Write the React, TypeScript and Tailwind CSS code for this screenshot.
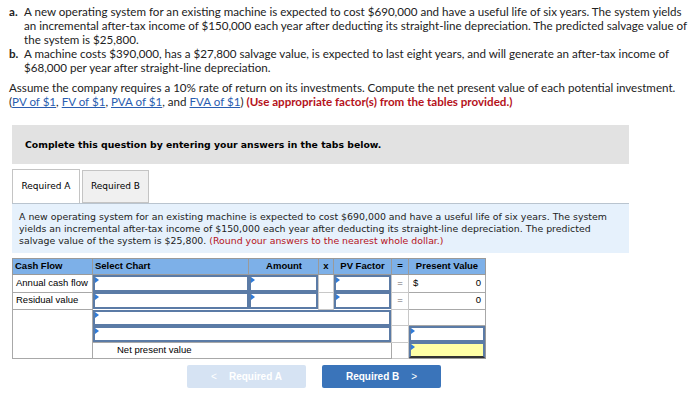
import React from "react";

const body = { fontFamily: "Lato, 'Open Sans', sans-serif" };
const verdana = { fontFamily: "'DejaVu Sans', Verdana, sans-serif" };
const arial = { fontFamily: "'Liberation Sans', Arial, sans-serif" };

function Marker() {
  return (
    <span className="absolute left-0 top-0 w-0 h-0 border-t-[3px] border-b-[3px] border-l-[4px] border-t-transparent border-b-transparent border-l-[#2f7bd8]" />
  );
}

function InputCell({ yellow = false, short = false }: { yellow?: boolean; short?: boolean }) {
  return (
    <div
      className={`relative ${short ? "h-[16px]" : "h-[17px]"} border-2 border-[#5b7ba6] ${
        yellow ? "bg-[#ffffa6] border-b-[#333]" : "bg-white"
      }`}
    >
      <Marker />
    </div>
  );
}

export default function App() {
  return (
    <div className="w-[700px] h-[409px] bg-white overflow-hidden text-[#222]">
      <div className="pl-[9px] pt-[5px] text-[11.6px] leading-[14px] whitespace-nowrap" style={body}>
        <div className="flex">
          <span className="w-[15px] shrink-0 font-bold">a.</span>
          <span>
            A new operating system for an existing machine is expected to cost $690,000 and have a useful life of six
            years. The system yields
            <br />
            an incremental after-tax income of $150,000 each year after deducting its straight-line depreciation. The
            predicted salvage value of
            <br />
            the system is $25,800.
          </span>
        </div>
        <div className="flex">
          <span className="w-[15px] shrink-0 font-bold">b.</span>
          <span>
            A machine costs $390,000, has a $27,800 salvage value, is expected to last eight years, and will generate
            an after-tax income of
            <br />
            $68,000 per year after straight-line depreciation.
          </span>
        </div>
        <p className="mt-[6px]">
          Assume the company requires a 10% rate of return on its investments. Compute the net present value of each
          potential investment.
          <br />
          (<a className="text-[#2a5db0] underline">PV of $1</a>, <a className="text-[#2a5db0] underline">FV of $1</a>,{" "}
          <a className="text-[#2a5db0] underline">PVA of $1</a>, and{" "}
          <a className="text-[#2a5db0] underline">FVA of $1</a>){" "}
          <span className="font-bold text-[#b5121b]">(Use appropriate factor(s) from the tables provided.)</span>
        </p>
      </div>

      <div className="ml-[12px] w-[617px]">
        <div className="mt-[16px] h-[39px] bg-[#e2e2e2] flex items-center pl-[13px]" style={verdana}>
          <span className="text-[9.3px] font-bold text-black">
            Complete this question by entering your answers in the tabs below.
          </span>
        </div>

        <div className="mt-[6px] flex items-end h-[33px]" style={verdana}>
          <div className="h-[34px] w-[68px] border border-[#c4c4c4] border-b-0 bg-white flex items-center justify-center text-[9px] text-black relative z-10">
            Required A
          </div>
          <div className="ml-[2px] h-[33px] w-[67px] border border-[#c4c4c4] bg-[#f0f0f0] flex items-center justify-center text-[9px] text-black">
            Required B
          </div>
        </div>

        <div
          className="border-t border-[#b9c4cf] bg-[#e6f1fc] px-[7px] pt-[7px] h-[50px] text-[9.4px] leading-[12px] text-[#222] whitespace-nowrap"
          style={verdana}
        >
          A new operating system for an existing machine is expected to cost $690,000 and have a useful life of six
          years. The system
          <br />
          yields an incremental after-tax income of $150,000 each year after deducting its straight-line depreciation.
          The predicted
          <br />
          salvage value of the system is $25,800.{" "}
          <span className="text-[#b5121b]">(Round your answers to the nearest whole dollar.)</span>
        </div>

        <table
          className="mt-[5px] border-collapse table-fixed w-[473px] text-[9.5px] text-black border border-[#999]"
          style={arial}
        >
          <colgroup>
            <col className="w-[80px]" />
            <col className="w-[156px]" />
            <col className="w-[70px]" />
            <col className="w-[15px]" />
            <col className="w-[58px]" />
            <col className="w-[17px]" />
            <col className="w-[77px]" />
          </colgroup>
          <thead>
            <tr className="h-[16px] bg-[#7db0e8] font-bold">
              <th className="border border-[#9a9a9a] text-left pl-[2px] font-bold">Cash Flow</th>
              <th className="border border-[#9a9a9a] text-left pl-[2px] font-bold">Select Chart</th>
              <th className="border border-[#9a9a9a] text-right pr-[16px] font-bold">Amount</th>
              <th className="border border-[#9a9a9a] text-center font-bold">x</th>
              <th className="border border-[#9a9a9a] text-center font-bold">PV Factor</th>
              <th className="border border-[#9a9a9a] text-center font-bold">=</th>
              <th className="border border-[#9a9a9a] text-center font-bold">Present Value</th>
            </tr>
          </thead>
          <tbody>
            {["Annual cash flow", "Residual value"].map((label, i) => (
              <tr key={label} className="h-[17px]">
                <td className="border border-[#a8a8a8] pl-[3px]">{label}</td>
                <td className="p-0">
                  <InputCell />
                </td>
                <td className="p-0">
                  <InputCell />
                </td>
                <td className="border border-[#c8c8c8]"></td>
                <td className="p-0">
                  <InputCell />
                </td>
                <td className="border border-[#c8c8c8] text-center text-[#666]">=</td>
                <td className="border border-[#a8a8a8] px-[4px]">
                  <div className="flex justify-between">
                    <span>{i === 0 ? "$" : ""}</span>
                    <span>0</span>
                  </div>
                </td>
              </tr>
            ))}
            <tr className="h-[16px]">
              <td rowSpan={3} className="border border-[#a8a8a8]"></td>
              <td colSpan={4} className="p-0">
                <InputCell short />
              </td>
              <td className="border border-[#c8c8c8]"></td>
              <td className="border border-[#a8a8a8] border-t-[#444]"></td>
            </tr>
            <tr className="h-[16px]">
              <td colSpan={4} className="p-0">
                <InputCell short />
              </td>
              <td className="border border-[#c8c8c8]"></td>
              <td className="p-0">
                <InputCell short />
              </td>
            </tr>
            <tr className="h-[16px]">
              <td colSpan={4} className="border border-[#a8a8a8] pl-[24px] leading-[14px]">
                Net present value
              </td>
              <td className="border border-[#c8c8c8]"></td>
              <td className="p-0">
                <InputCell yellow short />
              </td>
            </tr>
          </tbody>
        </table>

        <div className="mt-[6px] flex gap-[16px] pl-[175px] text-[10px] font-bold text-white" style={arial}>
          <div className="h-[23px] w-[119px] rounded-[2px] bg-[#d6e3f3] flex items-center justify-center gap-[12px]">
            <span className="font-normal">&lt;</span>
            <span>Required A</span>
          </div>
          <div className="h-[23px] w-[119px] rounded-[2px] bg-[#3a74ba] flex items-center justify-center gap-[12px]">
            <span>Required B</span>
            <span className="font-normal">&gt;</span>
          </div>
        </div>
      </div>
    </div>
  );
}
